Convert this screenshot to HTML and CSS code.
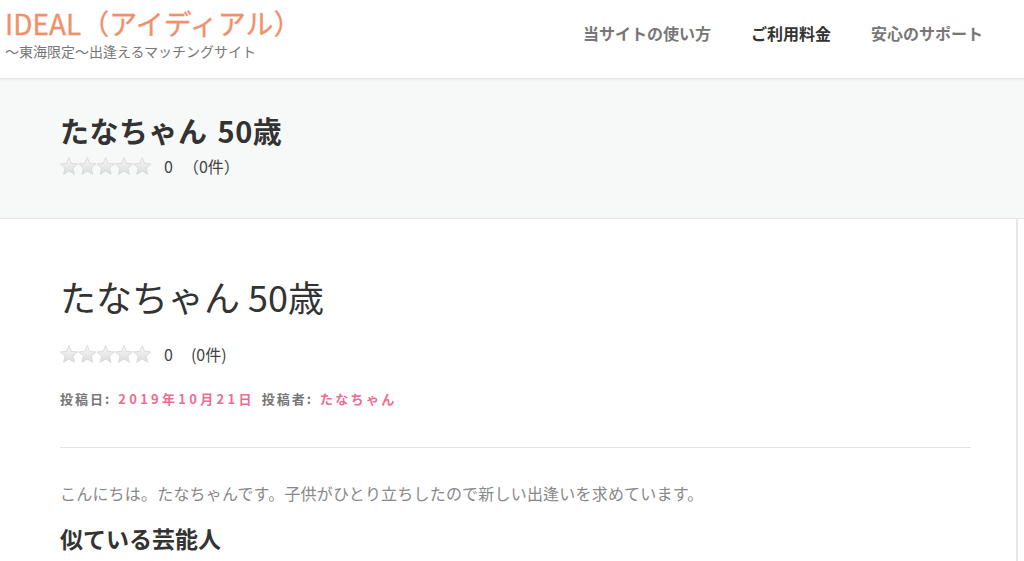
FILE: index.html
```html
<!DOCTYPE html>
<html lang="ja">
<head>
    <meta charset="UTF-8">
    <meta name="viewport" content="width=device-width, initial-scale=1.0">
    <title>たなちゃん 50歳 | IDEAL（アイディアル）</title>
    <link rel="stylesheet" href="styles.css">
</head>
<body>
    <header class="site-header">
        <div class="branding">
            <p class="site-title">IDEAL（アイディアル）</p>
            <p class="site-desc">～東海限定～出逢えるマッチングサイト</p>
        </div>
        <nav class="main-nav">
            <a href="#">当サイトの使い方</a>
            <a href="#" class="current">ご利用料金</a>
            <a href="#">安心のサポート</a>
        </nav>
    </header>

    <div class="page-band">
        <h1 class="band-title">たなちゃん 50歳</h1>
        <div class="rating">
            <svg class="stars" width="92" height="20" viewBox="0 0 92 20">
                <defs>
                    <linearGradient id="starFill" x1="0" y1="0" x2="0" y2="1">
                        <stop offset="0" stop-color="#f8f8f8"/>
                        <stop offset="1" stop-color="#dcdcdc"/>
                    </linearGradient>
                    <path id="star" d="M9 0.5 L11.4 6.4 L17.6 6.9 L12.9 11 L14.4 17.3 L9 14 L3.6 17.3 L5.1 11 L0.4 6.9 L6.6 6.4 Z"/>
                </defs>
                <use href="#star" x="0" y="1" fill="url(#starFill)" stroke="#d4d4d4" stroke-width="0.8"/>
                <use href="#star" x="18.3" y="1" fill="url(#starFill)" stroke="#d4d4d4" stroke-width="0.8"/>
                <use href="#star" x="36.6" y="1" fill="url(#starFill)" stroke="#d4d4d4" stroke-width="0.8"/>
                <use href="#star" x="54.9" y="1" fill="url(#starFill)" stroke="#d4d4d4" stroke-width="0.8"/>
                <use href="#star" x="73.2" y="1" fill="url(#starFill)" stroke="#d4d4d4" stroke-width="0.8"/>
            </svg>
            <span class="score">0</span>
            <span class="count">（0件）</span>
        </div>
    </div>

    <div class="content-wrap">
        <article class="entry">
            <h1 class="entry-title">たなちゃん 50歳</h1>
            <div class="rating">
                <svg class="stars" width="92" height="20" viewBox="0 0 92 20">
                    <use href="#star" x="0" y="1" fill="url(#starFill)" stroke="#d4d4d4" stroke-width="0.8"/>
                    <use href="#star" x="18.3" y="1" fill="url(#starFill)" stroke="#d4d4d4" stroke-width="0.8"/>
                    <use href="#star" x="36.6" y="1" fill="url(#starFill)" stroke="#d4d4d4" stroke-width="0.8"/>
                    <use href="#star" x="54.9" y="1" fill="url(#starFill)" stroke="#d4d4d4" stroke-width="0.8"/>
                    <use href="#star" x="73.2" y="1" fill="url(#starFill)" stroke="#d4d4d4" stroke-width="0.8"/>
                </svg>
                <span class="score">0</span>
                <span class="count">(0件)</span>
            </div>
            <p class="entry-meta">
                投稿日: <a href="#" class="date">2019年10月21日</a> 投稿者: <a href="#">たなちゃん</a>
            </p>
            <hr class="divider">
            <p class="entry-text">こんにちは。たなちゃんです。子供がひとり立ちしたので新しい出逢いを求めています。</p>
            <h2 class="entry-sub">似ている芸能人</h2>
        </article>
    </div>
</body>
</html>
```

FILE: styles.css
```css
body {
    margin: 0;
    font-family: "Noto Sans CJK JP", "Noto Sans", sans-serif;
    color: #333;
    background-color: #fff;
    overflow: hidden;
}
a {
    text-decoration: none;
}
.site-header {
    display: flex;
    justify-content: space-between;
    align-items: flex-start;
    height: 78px;
    padding-left: 5px;
    border-bottom: 1px solid #e4e4e4;
    box-shadow: 0 1px 2px rgba(0, 0, 0, 0.06);
    position: relative; /* keeps the shadow above the band */
}
.site-title {
    margin: 5px 0 0 0;
    font-size: 28px;
    line-height: 37px;
    color: #f0906a; /* orange logo text */
    -webkit-text-stroke: 0.3px #f0906a; /* a touch heavier, like the original */
}
.site-desc {
    margin: 0;
    font-size: 14px;
    line-height: 18px;
    color: #777;
}
.main-nav {
    display: flex;
    padding: 22px 21px 0 0;
}
.main-nav a {
    padding: 0 20px;
    font-size: 16px;
    font-weight: bold;
    line-height: 22px;
    color: #777;
}
.main-nav a.current {
    color: #333;
}
.page-band {
    height: 140px;
    padding: 31px 60px 0 60px;
    box-sizing: border-box;
    background-color: #f7f8f8;
    border-bottom: 1px solid #e4e4e4;
}
.band-title {
    margin: 0;
    font-size: 29px;
    line-height: 40px;
    letter-spacing: 0.5px;
    font-weight: bold;
    word-spacing: 3px;
}
.rating {
    display: flex;
    align-items: center;
    height: 24px;
    margin-top: 4px;
    font-size: 16px;
    color: #444;
}
.stars {
    display: block;
    margin-right: 12px;
}
.score {
    margin-right: 10px;
}
.content-wrap {
    display: flex;
}
.entry {
    width: 1018px;
    box-sizing: border-box;
    padding: 0 45px 0 60px;
    border-right: 2px solid #e8e8e8;
    min-height: 400px;
}
.entry-title {
    margin: 52px 0 0 0;
    font-size: 36px;
    font-weight: normal;
    line-height: 50px;
}
.entry .rating {
    margin-top: 21px;
}
.entry .score {
    margin-right: 18px;
}
.entry-meta {
    margin: 23px 0 0 0;
    font-size: 13px;
    line-height: 20px;
    font-weight: bold;
    color: #777;
    letter-spacing: 2px;
    word-spacing: 2px;
}
.entry-meta a {
    color: #f06b8f; /* pink links */
    letter-spacing: 2.3px;
}
.entry-meta a.date {
    letter-spacing: 3.3px;
}
.divider {
    margin: 38px 0 0 0;
    border: none;
    border-top: 1px solid #e2e2e2;
}
.entry-text {
    margin: 32px 0 0 0;
    font-size: 16px;
    line-height: 26px;
    letter-spacing: 0.2px;
    color: #888;
}
.entry-sub {
    margin: 16px 0 0 0;
    font-size: 23px;
    line-height: 32px;
    font-weight: bold;
}
```
